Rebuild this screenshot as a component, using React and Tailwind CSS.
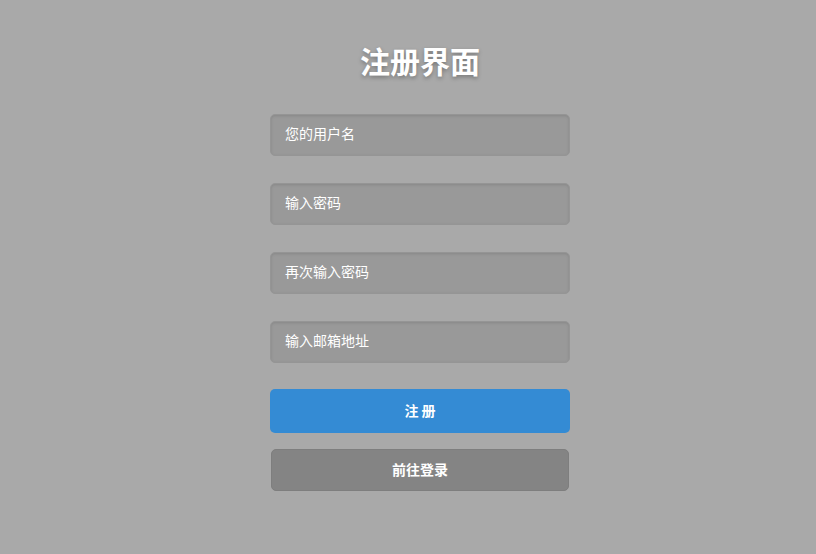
export default function App() {
  const font = { fontFamily: '"Microsoft YaHei", "Noto Sans CJK SC", sans-serif' };
  const inputs = ["您的用户名", "输入密码", "再次输入密码", "输入邮箱地址"];
  return (
    <div className="w-[816px] h-[554px] bg-[#a9a9a9] overflow-hidden" style={font}>
      <div className="ml-[270px] w-[300px] flex flex-col">
        <h1 className="mt-[39px] text-center text-[30px] leading-[42px] font-bold text-white [text-shadow:0_2px_4px_rgba(0,0,0,0.3)]">
          注册界面
        </h1>
        <div className="mt-[33px] flex flex-col gap-[27px]">
          {inputs.map((t) => (
            <div
              key={t}
              className="h-[42px] rounded-[5px] bg-[#999999] border border-[#959595] shadow-[inset_0_1px_3px_rgba(0,0,0,0.12)] flex items-center pl-[14px] pb-[3px] text-[14px] text-white"
            >
              {t}
            </div>
          ))}
        </div>
        <button className="mt-[26px] h-[44px] rounded-[5px] bg-[#348bd4] text-white text-[14px] font-bold pb-[2px]">
          注 册
        </button>
        <button className="mt-[16px] mx-[1px] h-[42px] rounded-[5px] bg-[#848484] border border-[#7e7e7e] text-white text-[14px] font-bold pb-[2px]">
          前往登录
        </button>
      </div>
    </div>
  );
}
